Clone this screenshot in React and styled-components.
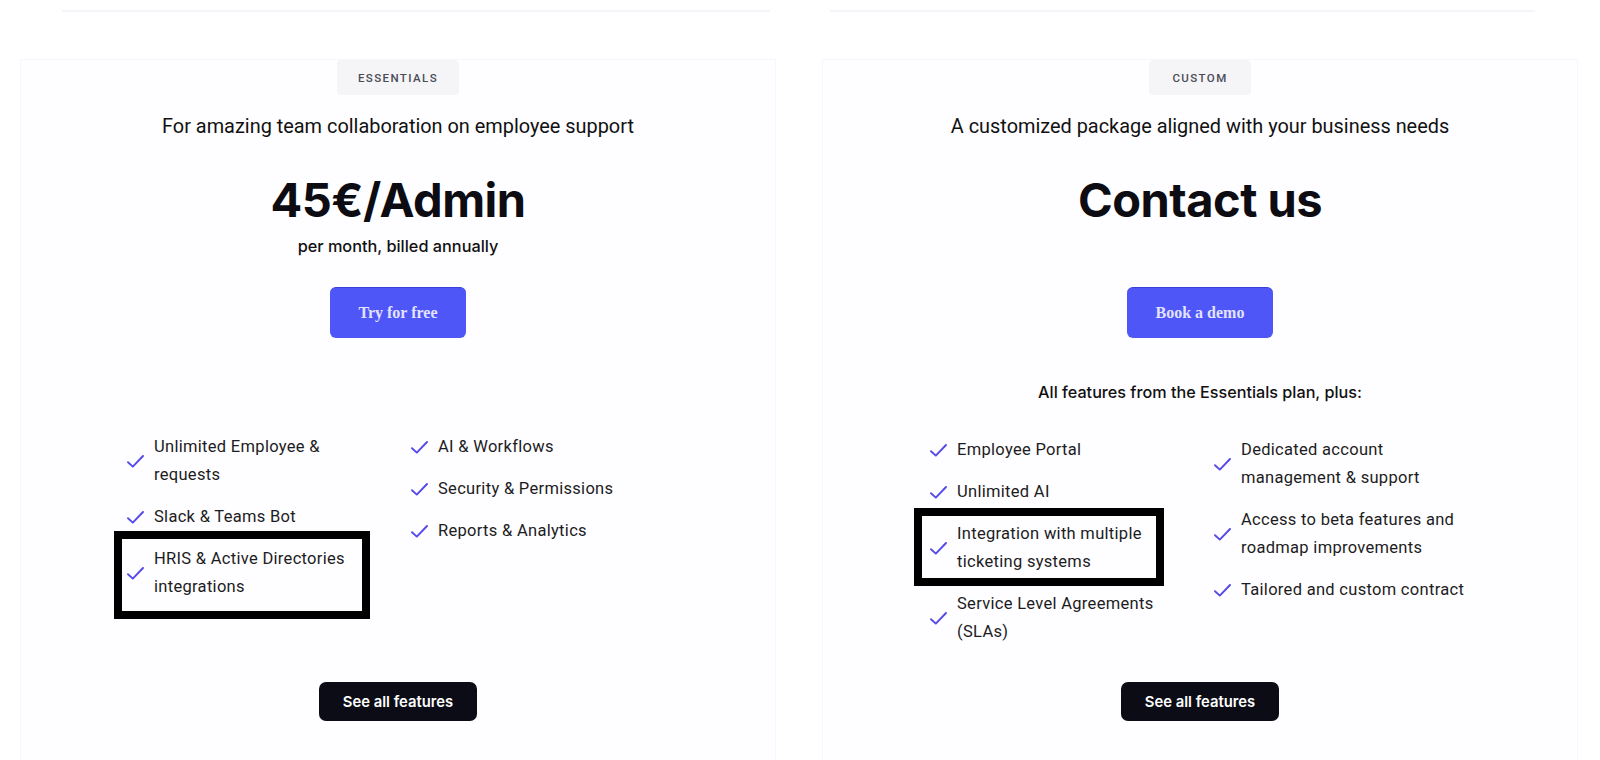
import React from "react";
import styled, { createGlobalStyle } from "styled-components";

const Global = createGlobalStyle`
  html, body { margin: 0; padding: 0; background: #ffffff; }
  body { font-family: "Inter", "Roboto", sans-serif; color: #111; overflow: hidden; }
  * { box-sizing: border-box; }
`;

const Page = styled.div`
  width: 1600px;
  height: 760px;
  overflow: hidden;
  display: flex;
  flex-direction: column;
`;

const TopRow = styled.div`
  flex-shrink: 0;
  display: grid;
  grid-template-columns: 708px 705px;
  column-gap: 60px;
  padding: 10px 0 0 62px;
  height: 59px;
`;

const TopLine = styled.div`
  height: 2px;
  background: #f6f4f8;
`;

const Cards = styled.div`
  flex-shrink: 0;
  display: grid;
  grid-template-columns: 756px 756px;
  column-gap: 46px;
  padding-left: 20px;
`;

const Card = styled.section`
  height: 720px;
  background: #fefdff;
  border: 1px solid #f8f6fa;
  border-bottom: none;
  display: flex;
  flex-direction: column;
  align-items: center;
`;

const Badge = styled.div`
  height: 35px;
  padding: 0 ${(p) => p.$pad}px;
  display: flex;
  align-items: center;
  background: #f5f5f8;
  border-radius: 4px;
  font-family: "Roboto", sans-serif;
  font-size: 11.5px;
  font-weight: 500;
  letter-spacing: 1.4px;
  color: #4b4b55;
`;

const Subtitle = styled.h2`
  margin: 19px 0 0;
  font-family: "Roboto", sans-serif;
  font-size: 19.9px;
  line-height: 26px;
  font-weight: 400;
  color: #111;
`;

const Price = styled.div`
  margin-top: ${(p) => p.$mt}px;
  font-family: "Inter", sans-serif;
  font-size: 47px;
  line-height: 56px;
  font-weight: 700;
  letter-spacing: -0.5px;
  color: #0c0c12;
`;

const PriceNote = styled.div`
  margin-top: 8px;
  height: ${(p) => p.$h}px;
  font-family: "Inter", sans-serif;
  font-size: 16.3px;
  line-height: 20px;
  font-weight: 500;
  color: #111;
`;

const PrimaryButton = styled.button`
  margin-top: ${(p) => p.$mt}px;
  width: ${(p) => p.$w}px;
  height: 51px;
  border: none;
  border-top: 1px solid #3b40d8;
  border-radius: 6px;
  background: #4f56f7;
  color: #e2e3ff;
  font-family: "Liberation Serif", serif;
  font-weight: 700;
  font-size: 16px;
  cursor: pointer;
`;

const Details = styled.div`
  height: 344px;
  width: 100%;
  padding-top: ${(p) => p.$pt}px;
  display: flex;
  flex-direction: column;
  align-items: center;
`;

const PlusNote = styled.div`
  font-family: "Inter", sans-serif;
  font-size: 16.2px;
  line-height: 24px;
  font-weight: 500;
  color: #111;
  margin-bottom: 32px;
`;

const FeatureGrid = styled.div`
  align-self: stretch;
  display: grid;
  grid-template-columns: 284px 320px;
  padding-left: ${(p) => p.$pl}px;
`;

const FeatureCol = styled.ul`
  list-style: none;
  margin: 0;
  padding: 0;
  display: flex;
  flex-direction: column;
  gap: 14px;
`;

const FeatureItem = styled.li`
  position: relative;
  display: flex;
  align-items: center;
  gap: 10px;
`;

const FeatureText = styled.span`
  font-family: "Roboto", sans-serif;
  font-size: 16.5px;
  letter-spacing: 0.3px;
  line-height: 28px;
  color: #1c1c22;
  white-space: pre;
`;

const Highlight = styled.div`
  position: absolute;
  left: ${(p) => p.$l}px;
  top: ${(p) => p.$t}px;
  width: ${(p) => p.$w}px;
  height: ${(p) => p.$h}px;
  border: 8px solid #000;
  pointer-events: none;
`;

const DarkButton = styled.button`
  width: 158px;
  height: 39px;
  border: none;
  border-radius: 7px;
  background: #0b0c15;
  color: #fff;
  font-family: "Inter", sans-serif;
  font-weight: 600;
  font-size: 14.8px;
  cursor: pointer;
`;

const Check = () => (
  <svg width="17" height="13" viewBox="0 0 17 13" fill="none" style={{ flexShrink: 0 }}>
    <path d="M1 7.2 L5.8 11.6 L16 1" stroke="#5549e8" strokeWidth="1.9" strokeLinecap="round" strokeLinejoin="round" />
  </svg>
);

const Feature = ({ text, box }) => (
  <FeatureItem>
    <Check />
    <FeatureText>{text}</FeatureText>
    {box && <Highlight $l={box.l} $t={box.t} $w={box.w} $h={box.h} />}
  </FeatureItem>
);

const essentialsLeft = [
  { text: "Unlimited Employee &\nrequests" },
  { text: "Slack & Teams Bot" },
  { text: "HRIS & Active Directories\nintegrations", box: { l: -13, t: -14, w: 256, h: 88 } },
];
const essentialsRight = [
  { text: "AI & Workflows" },
  { text: "Security & Permissions" },
  { text: "Reports & Analytics" },
];
const customLeft = [
  { text: "Employee Portal" },
  { text: "Unlimited AI" },
  { text: "Integration with multiple\nticketing systems", box: { l: -16, t: -12, w: 250, h: 78 } },
  { text: "Service Level Agreements\n(SLAs)" },
];
const customRight = [
  { text: "Dedicated account\nmanagement & support" },
  { text: "Access to beta features and\nroadmap improvements" },
  { text: "Tailored and custom contract" },
];

export default function App() {
  return (
    <Page>
      <Global />
      <TopRow>
        <TopLine />
        <TopLine />
      </TopRow>
      <Cards>
        <Card>
          <Badge $pad={21}>ESSENTIALS</Badge>
          <Subtitle>For amazing team collaboration on employee support</Subtitle>
          <Price $mt={32}>45€/Admin</Price>
          <PriceNote $h={20}>per month, billed annually</PriceNote>
          <PrimaryButton $mt={31} $w={136}>Try for free</PrimaryButton>
          <Details $pt={95}>
            <FeatureGrid $pl={106}>
              <FeatureCol>
                {essentialsLeft.map((f) => (
                  <Feature key={f.text} {...f} />
                ))}
              </FeatureCol>
              <FeatureCol>
                {essentialsRight.map((f) => (
                  <Feature key={f.text} {...f} />
                ))}
              </FeatureCol>
            </FeatureGrid>
          </Details>
          <DarkButton>See all features</DarkButton>
        </Card>
        <Card>
          <Badge $pad={23}>CUSTOM</Badge>
          <Subtitle>A customized package aligned with your business needs</Subtitle>
          <Price $mt={32}>Contact us</Price>
          <PriceNote $h={20} />
          <PrimaryButton $mt={31} $w={146}>Book a demo</PrimaryButton>
          <Details $pt={42}>
            <PlusNote>All features from the Essentials plan, plus:</PlusNote>
            <FeatureGrid $pl={107}>
              <FeatureCol>
                {customLeft.map((f) => (
                  <Feature key={f.text} {...f} />
                ))}
              </FeatureCol>
              <FeatureCol>
                {customRight.map((f) => (
                  <Feature key={f.text} {...f} />
                ))}
              </FeatureCol>
            </FeatureGrid>
          </Details>
          <DarkButton>See all features</DarkButton>
        </Card>
      </Cards>
    </Page>
  );
}
